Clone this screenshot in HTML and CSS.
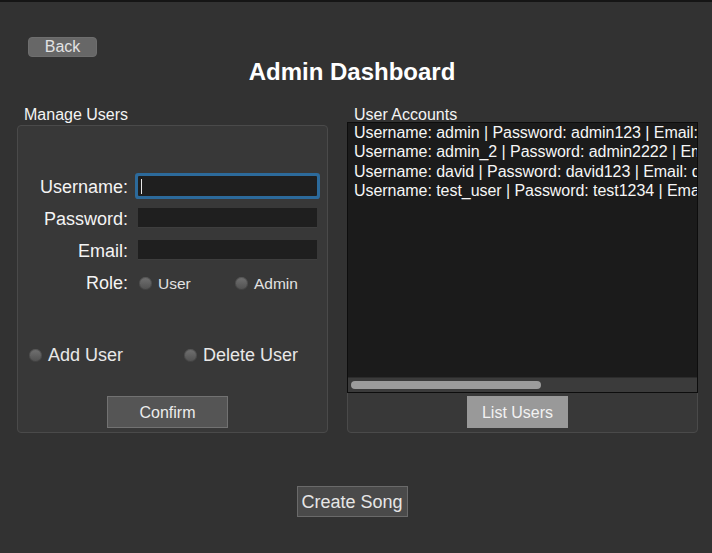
FILE: index.html
```html
<!DOCTYPE html>
<html lang="en">
<head>
<meta charset="utf-8">
<title>Admin Dashboard</title>
<link rel="stylesheet" href="styles.css">
</head>
<body>
<div class="page">
  <div class="back-row"><button class="back-btn">Back</button></div>
  <h1 class="title">Admin Dashboard</h1>
  <div class="panels">
    <section class="col col-left">
      <div class="group-label">Manage Users</div>
      <div class="panel panel-left">
        <div class="form">
          <label class="f-label">Username:</label>
          <div class="field focused"><span class="caret"></span></div>
          <label class="f-label">Password:</label>
          <div class="field"></div>
          <label class="f-label">Email:</label>
          <div class="field"></div>
          <label class="f-label">Role:</label>
          <div class="role">
            <span class="opt opt-first"><span class="radio"></span><span class="opt-text small">User</span></span>
            <span class="opt"><span class="radio"></span><span class="opt-text small">Admin</span></span>
          </div>
        </div>
        <div class="actions">
          <span class="opt act-first"><span class="radio"></span><span class="opt-text">Add User</span></span>
          <span class="opt"><span class="radio"></span><span class="opt-text">Delete User</span></span>
        </div>
        <div class="btn-row"><button class="btn confirm">Confirm</button></div>
      </div>
    </section>
    <section class="col col-right">
      <div class="group-label">User Accounts</div>
      <div class="panel panel-right">
        <div class="list">
          <div class="rows">
            <div class="row">Username: admin | Password: admin123 | Email: admin@example.com | Role: admin</div>
            <div class="row">Username: admin_2 | Password: admin2222 | Email: admin2@example.com | Role: admin</div>
            <div class="row">Username: david | Password: david123 | Email: david@example.com | Role: user</div>
            <div class="row">Username: test_user | Password: test1234 | Email: test@example.com | Role: user</div>
          </div>
          <div class="track"><div class="thumb"></div></div>
        </div>
        <div class="btn-row"><button class="btn list-btn">List Users</button></div>
      </div>
    </section>
  </div>
  <div class="bottom-row"><button class="btn create">Create Song</button></div>
</div>
</body>
</html>
```
FILE: styles.css
```css
html, body {
  margin: 0;
  padding: 0;
}
body {
  background: #323232;
  border-top: 2px solid #151515;
  font-family: "Liberation Sans", Arial, Helvetica, sans-serif;
  color: #f2f2f2;
  height: 551px;
  overflow: hidden;
}
.page {
  width: 704px;
  display: flex;
  flex-direction: column;
}
button {
  font-family: inherit;
  padding: 0;
  margin: 0;
  cursor: default;
}
.back-row {
  margin-top: 35px;
  padding-left: 28px;
  display: flex;
}
.back-btn {
  width: 69px;
  height: 20px;
  background: #676767;
  border: 1px solid #6e6e6e;
  border-radius: 4px;
  color: #e2e2e2;
  font-size: 16px;
  line-height: 18px;
}
.title {
  margin: 1px 0 0;
  text-align: center;
  font-size: 24px;
  line-height: 28px;
  font-weight: bold;
  color: #ffffff;
}
.panels {
  margin-top: 19px;
  padding-left: 17px;
  display: flex;
  gap: 19px;
  align-items: flex-start;
}
.col {
  display: flex;
  flex-direction: column;
}
.col-left { width: 311px; }
.col-right { width: 351px; }
.group-label {
  font-size: 16px;
  line-height: 15px;
  padding: 2px 0 0 7px;
  color: #f4f4f4;
}
.panel {
  background: #383838;
  border: 1px solid #4a4a4a;
  border-radius: 4px;
  display: flex;
  flex-direction: column;
}
.panel-left {
  margin-top: 3px;
  padding: 44px 0 4px;
}
.form {
  display: grid;
  grid-template-columns: 110px 179px;
  grid-auto-rows: 32px;
  column-gap: 10px;
  align-items: center;
}
.f-label {
  text-align: right;
  font-size: 18px;
  line-height: 20px;
  padding-top: 2px;
  color: #f4f4f4;
}
.field {
  height: 19px;
  background: #1f1f1f;
  border-bottom: 1px solid #3e3e3e;
  display: flex;
  align-items: center;
}
.field.focused {
  height: 20px;
  border-bottom: none;
  border-radius: 1px;
  box-shadow: 0 0 0 3px #2c6a9b;
}
.caret {
  width: 1px;
  height: 15px;
  margin-left: 3px;
  background: #e8e8e8;
}
.role {
  display: flex;
  align-items: center;
  padding: 3px 0 0 1px;
}
.opt {
  display: flex;
  align-items: center;
  gap: 6px;
}
.opt-first { width: 96px; }
.radio {
  width: 13px;
  height: 13px;
  border-radius: 50%;
  background: linear-gradient(#727272, #4f4f4f);
  box-shadow: inset 0 0 0 1px rgba(40, 40, 40, 0.35);
  flex: none;
}
.opt-text {
  font-size: 18px;
  line-height: 20px;
  color: #e8e8e8;
}
.opt-text.small {
  font-size: 15.5px;
  color: #e2e2e2;
}
.actions {
  margin-top: 40px;
  height: 32px;
  box-sizing: border-box;
  padding: 2px 0 0 11px;
  display: flex;
  align-items: center;
}
.act-first { width: 155px; }
.btn-row {
  display: flex;
  justify-content: center;
  padding-right: 10px;
}
.panel-left .btn-row { margin-top: 26px; }
.btn {
  height: 32px;
  padding-top: 2px;
  font-size: 16px;
  color: #ececec;
}
.confirm {
  width: 121px;
  background: #555555;
  border: 1px solid #727272;
}
.panel-right {
  padding-bottom: 4px;
}
.list {
  margin: -1px -1px 0;
  height: 271px;
  box-sizing: border-box;
  border: 1px solid #0d0d0d;
  background: #1b1b1b;
  display: flex;
  flex-direction: column;
}
.rows {
  flex: 1;
  overflow: hidden;
  padding-left: 6px;
}
.row {
  white-space: nowrap;
  font-size: 16px;
  line-height: 19.33px;
  letter-spacing: -0.05px;
  color: #f6f6f6;
}
.track {
  height: 15px;
  background: #3b3b3b;
  border-top: 1px solid #2c2c2c;
  box-sizing: border-box;
  display: flex;
  align-items: center;
  padding-left: 3px;
}
.thumb {
  width: 190px;
  height: 8px;
  border-radius: 4px;
  background: #9c9c9c;
}
.panel-right .btn-row { margin-top: 3px; }
.list-btn {
  width: 101px;
  background: #999999;
  border: none;
  color: #f2f2f2;
}
.bottom-row {
  margin-top: 53px;
  display: flex;
  justify-content: center;
}
.create {
  width: 111px;
  height: 31px;
  background: #4a4a4a;
  border: 1px solid #6a6a6a;
  font-size: 18px;
  color: #e6e6e6;
}
```
